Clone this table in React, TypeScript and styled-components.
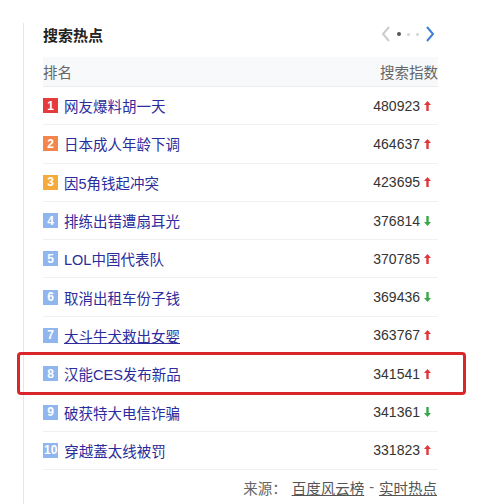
import React from "react";
import styled, { createGlobalStyle } from "styled-components";

// hot search ranking panel, row 8 is boxed in red

const GlobalStyle = createGlobalStyle`
  body {
    margin: 0;
    background: #ffffff;
    font-family: "Liberation Sans", "Noto Sans CJK SC", sans-serif;
  }
`;

const Page = styled.div`
  width: 492px;
  height: 504px;
  padding: 23px 0 0 23px;
  box-sizing: border-box;
  overflow: hidden;
`;

const Panel = styled.div`
  border-left: 1px solid #e6e6e6;
  padding-left: 19px;
  width: 395px;
  height: 481px;
`;

const TitleRow = styled.div`
  display: flex;
  align-items: center;
  justify-content: space-between;
  height: 22px;
`;

const Title = styled.h3`
  margin: 0;
  font-size: 15px;
  font-weight: bold;
  color: #222;
`;

const Pager = styled.div`
  display: flex;
  align-items: center;
  gap: 6px;
  margin-right: 3px;
`;

const Dot = styled.span<{ $active?: boolean }>`
  width: ${(p) => (p.$active ? 4 : 3)}px;
  height: ${(p) => (p.$active ? 4 : 3)}px;
  border-radius: 50%;
  background: ${(p) => (p.$active ? "#555" : "#d4d4d4")};
`;

const HeaderRow = styled.div`
  display: flex;
  align-items: center;
  justify-content: space-between;
  margin-top: 12px;
  height: 29px;
  background: #f8f9fb;
  border-bottom: 1px solid #ececec;
  font-size: 14.5px;
  color: #666;
`;

const Row = styled.div<{ $marked?: boolean }>`
  position: relative;
  display: flex;
  align-items: center;
  height: 38.3px;
  box-sizing: border-box;
  border-bottom: 1px solid #f0f0f0;

  ${(p) =>
    p.$marked &&
    `
    &::after {
      content: "";
      position: absolute;
      left: -26px;
      right: -28px;
      top: -3px;
      bottom: -3px;
      border: 3px solid #d9262b;
      border-radius: 4px;
    }
  `}
`;

const Badge = styled.span<{ $color: string }>`
  display: inline-flex;
  align-items: center;
  justify-content: center;
  min-width: 15px;
  height: 15px;
  padding: 0 1px;
  box-sizing: border-box;
  background: ${(p) => p.$color};
  color: #fff;
  font-size: 12px;
  font-weight: bold;
  margin-right: 6px;
`;

const Keyword = styled.a<{ $hover?: boolean }>`
  font-size: 14.5px;
  color: #2c2c9c;
  text-decoration: ${(p) => (p.$hover ? "underline" : "none")};
  flex: 1;
`;

const Score = styled.span`
  font-size: 14px;
  color: #333;
  display: flex;
  align-items: center;
  gap: 4px;
  margin-right: 7px;
`;

const Footer = styled.div`
  display: flex;
  justify-content: flex-end;
  align-items: center;
  gap: 5px;
  height: 35px;
  font-size: 14.5px;
  color: #666;
  padding-right: 1px;
`;

const FooterLink = styled.a`
  color: #555;
  text-decoration: underline;
`;

const Arrow = ({ up }: { up: boolean }) => (
  <svg width="7" height="10" viewBox="0 0 7 10">
    {up ? (
      <path d="M3.5 0 L7 4 L4.7 4 L4.7 10 L2.3 10 L2.3 4 L0 4 Z" fill="#e0363b" />
    ) : (
      <path d="M3.5 10 L7 6 L4.7 6 L4.7 0 L2.3 0 L2.3 6 L0 6 Z" fill="#3aa648" />
    )}
  </svg>
);

const Chevron = ({ dir, color }: { dir: "left" | "right"; color: string }) => (
  <svg width="10" height="18" viewBox="0 0 10 18">
    <path
      d={dir === "left" ? "M8 2 L2 9 L8 16" : "M2 2 L8 9 L2 16"}
      fill="none"
      stroke={color}
      strokeWidth="2"
    />
  </svg>
);

type Item = { word: string; score: number; up: boolean };

const items: Item[] = [
  { word: "网友爆料胡一天", score: 480923, up: true },
  { word: "日本成人年龄下调", score: 464637, up: true },
  { word: "因5角钱起冲突", score: 423695, up: true },
  { word: "排练出错遭扇耳光", score: 376814, up: false },
  { word: "LOL中国代表队", score: 370785, up: true },
  { word: "取消出租车份子钱", score: 369436, up: false },
  { word: "大斗牛犬救出女婴", score: 363767, up: true },
  { word: "汉能CES发布新品", score: 341541, up: true },
  { word: "破获特大电信诈骗", score: 341361, up: false },
  { word: "穿越蓋太线被罚", score: 331823, up: true },
];

const badgeColor = (rank: number) => {
  if (rank === 1) return "#e63b3d";
  if (rank === 2) return "#f3864c";
  if (rank === 3) return "#f5aa3c";
  return "#8fb6ee";
};

const App = (): JSX.Element => {
  return (
    <Page>
      <GlobalStyle />
      <Panel>
        <TitleRow>
          <Title>搜索热点</Title>
          <Pager>
            <Chevron dir="left" color="#cccccc" />
            <Dot $active />
            <Dot />
            <Dot />
            <Chevron dir="right" color="#3d7fd6" />
          </Pager>
        </TitleRow>
        <HeaderRow>
          <span>排名</span>
          <span>搜索指数</span>
        </HeaderRow>
        {items.map((item, i) => (
          <Row key={item.word} $marked={i === 7}>
            <Badge $color={badgeColor(i + 1)}>{i + 1}</Badge>
            <Keyword $hover={i === 6}>{item.word}</Keyword>
            <Score>
              {item.score}
              <Arrow up={item.up} />
            </Score>
          </Row>
        ))}
        <Footer>
          <span>来源：</span>
          <FooterLink>百度风云榜</FooterLink>
          <span>-</span>
          <FooterLink>实时热点</FooterLink>
        </Footer>
      </Panel>
    </Page>
  );
};

export default App;
